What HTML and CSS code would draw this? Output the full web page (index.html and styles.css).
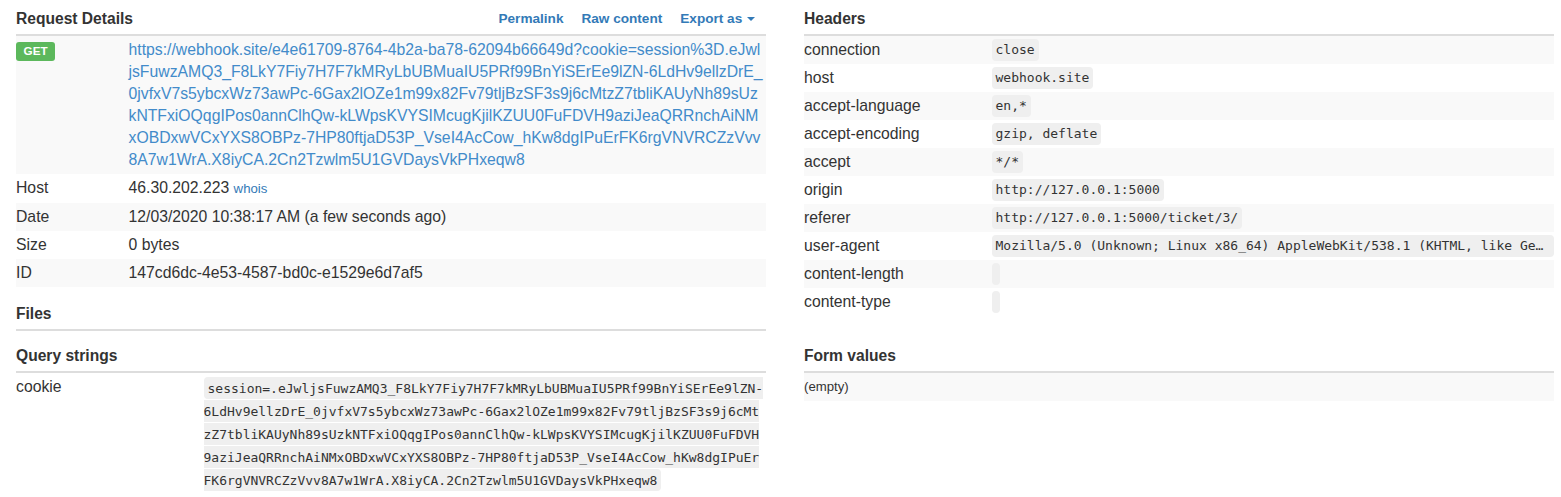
FILE: index.html
```html
<!DOCTYPE html>
<html lang="en">
<head>
<meta charset="utf-8">
<title>Request Details</title>
<link rel="stylesheet" href="styles.css">
</head>
<body>
<div class="page">
  <div class="col">
    <table class="tbl striped details">
      <colgroup><col class="c-key-sm"><col></colgroup>
      <thead>
        <tr><th colspan="2">
          <div class="head">
            <span>Request Details</span>
            <span class="actions">
              <a class="act">Permalink</a>
              <a class="act">Raw content</a>
              <a class="act">Export as <span class="caret"></span></a>
            </span>
          </div>
        </th></tr>
      </thead>
      <tbody>
        <tr><td><span class="label">GET</span></td><td class="url"><a class="url-link">https://webhook.site/e4e61709-8764-4b2a-ba78-62094b66649d?cookie=session%3D.eJwl<br>jsFuwzAMQ3_F8LkY7Fiy7H7F7kMRyLbUBMuaIU5PRf99BnYiSErEe9lZN-6LdHv9ellzDrE_<br>0jvfxV7s5ybcxWz73awPc-6Gax2lOZe1m99x82Fv79tljBzSF3s9j6cMtzZ7tbliKAUyNh89sUz<br>kNTFxiOQqgIPos0annClhQw-kLWpsKVYSIMcugKjilKZUU0FuFDVH9aziJeaQRRnchAiNM<br>xOBDxwVCxYXS8OBPz-7HP80ftjaD53P_VseI4AcCow_hKw8dgIPuErFK6rgVNVRCZzVvv<br>8A7w1WrA.X8iyCA.2Cn2Tzwlm5U1GVDaysVkPHxeqw8</a></td></tr>
        <tr><td>Host</td><td>46.30.202.223 <a class="small-link">whois</a></td></tr>
        <tr><td>Date</td><td>12/03/2020 10:38:17 AM (a few seconds ago)</td></tr>
        <tr><td>Size</td><td>0 bytes</td></tr>
        <tr><td>ID</td><td>147cd6dc-4e53-4587-bd0c-e1529e6d7af5</td></tr>
      </tbody>
    </table>
    <table class="tbl files">
      <thead><tr><th>Files</th></tr></thead>
    </table>
  </div>

  <div class="col">
    <table class="tbl striped headers">
      <colgroup><col class="c-key"><col></colgroup>
      <thead><tr><th colspan="2">Headers</th></tr></thead>
      <tbody>
        <tr><td>connection</td><td class="val"><code class="hv">close</code></td></tr>
        <tr><td>host</td><td class="val"><code class="hv">webhook.site</code></td></tr>
        <tr><td>accept-language</td><td class="val"><code class="hv">en,*</code></td></tr>
        <tr><td>accept-encoding</td><td class="val"><code class="hv">gzip, deflate</code></td></tr>
        <tr><td>accept</td><td class="val"><code class="hv">*/*</code></td></tr>
        <tr><td>origin</td><td class="val"><code class="hv">http://127.0.0.1:5000</code></td></tr>
        <tr><td>referer</td><td class="val"><code class="hv">http://127.0.0.1:5000/ticket/3/</code></td></tr>
        <tr><td>user-agent</td><td class="val"><code class="hv">Mozilla/5.0 (Unknown; Linux x86_64) AppleWebKit/538.1 (KHTML, like Gecko) PhantomJS/2.1.1 Safari/538.1</code></td></tr>
        <tr><td>content-length</td><td class="val"><code class="hv"></code></td></tr>
        <tr><td>content-type</td><td class="val"><code class="hv"></code></td></tr>
      </tbody>
    </table>
  </div>

  <div class="col">
    <table class="tbl query">
      <colgroup><col class="c-key"><col></colgroup>
      <thead><tr><th colspan="2">Query strings</th></tr></thead>
      <tbody>
        <tr><td>cookie</td><td><code class="qv">session=.eJwljsFuwzAMQ3_F8LkY7Fiy7H7F7kMRyLbUBMuaIU5PRf99BnYiSErEe9lZN-6LdHv9ellzDrE_0jvfxV7s5ybcxWz73awPc-6Gax2lOZe1m99x82Fv79tljBzSF3s9j6cMtzZ7tbliKAUyNh89sUzkNTFxiOQqgIPos0annClhQw-kLWpsKVYSIMcugKjilKZUU0FuFDVH9aziJeaQRRnchAiNMxOBDxwVCxYXS8OBPz-7HP80ftjaD53P_VseI4AcCow_hKw8dgIPuErFK6rgVNVRCZzVvv8A7w1WrA.X8iyCA.2Cn2Tzwlm5U1GVDaysVkPHxeqw8</code></td></tr>
      </tbody>
    </table>
  </div>

  <div class="col">
    <table class="tbl striped form">
      <thead><tr><th>Form values</th></tr></thead>
      <tbody>
        <tr><td class="empty">(empty)</td></tr>
      </tbody>
    </table>
  </div>
</div>
</body>
</html>
```

FILE: styles.css
```css
* { box-sizing: border-box; }

body {
  margin: 0;
  font-family: "Liberation Sans", Arial, sans-serif;
  font-size: 15.75px;
  line-height: 22px;
  color: #333;
  background: #fff;
}

.page {
  display: grid;
  grid-template-columns: 750px 750px;
  column-gap: 38px;
  padding-left: 16px;
  align-items: start;
}

.tbl {
  width: 100%;
  border-collapse: separate;
  border-spacing: 0;
  table-layout: fixed;
  margin-bottom: 6px;
}

.details { margin-bottom: 8px; }

.c-key-sm { width: 15%; }
.c-key { width: 25%; }

.tbl th {
  text-align: left;
  font-weight: bold;
  font-size: 15.6px;
  padding: 8px 0 4px;
  border-bottom: 2px solid #ddd;
}

.tbl td {
  padding: 3px 0;
  vertical-align: top;
}

.striped tbody tr:nth-child(odd) { background: #f9f9f9; }

.head {
  display: flex;
  justify-content: space-between;
  align-items: center;
}

.actions {
  display: flex;
  padding-right: 2px;
}

.act {
  color: #337ab7;
  font-weight: bold;
  font-size: 13.6px;
  padding: 0 9px;
}

.caret {
  display: inline-block;
  width: 0;
  height: 0;
  margin-left: 1px;
  vertical-align: middle;
  border-top: 4px solid #337ab7;
  border-left: 4px solid transparent;
  border-right: 4px solid transparent;
}

.label {
  display: inline;
  background: #5cb85c;
  color: #fff;
  font-weight: bold;
  font-size: 11.7px;
  line-height: 1;
  padding: 0.2em 0.65em 0.3em;
  border-radius: 3px;
}

.url-link {
  color: #428bca;
  white-space: nowrap;
}

.small-link {
  color: #337ab7;
  font-size: 13.2px;
}

.val {
  padding: 4px 0 2px;
}

code {
  font-family: "DejaVu Sans Mono", "Liberation Mono", monospace;
  font-size: 13px;
  color: #333;
  background: #efefef;
  border-radius: 4px;
}

.hv {
  display: inline-block;
  vertical-align: top;
  max-width: 100%;
  height: 22px;
  line-height: 16px;
  padding: 3px 4px;
  white-space: nowrap;
  overflow: hidden;
  text-overflow: ellipsis;
}

.qv {
  padding: 3.5px 4px;
  word-break: break-all;
}

.empty {
  font-size: 13.2px;
}
```
